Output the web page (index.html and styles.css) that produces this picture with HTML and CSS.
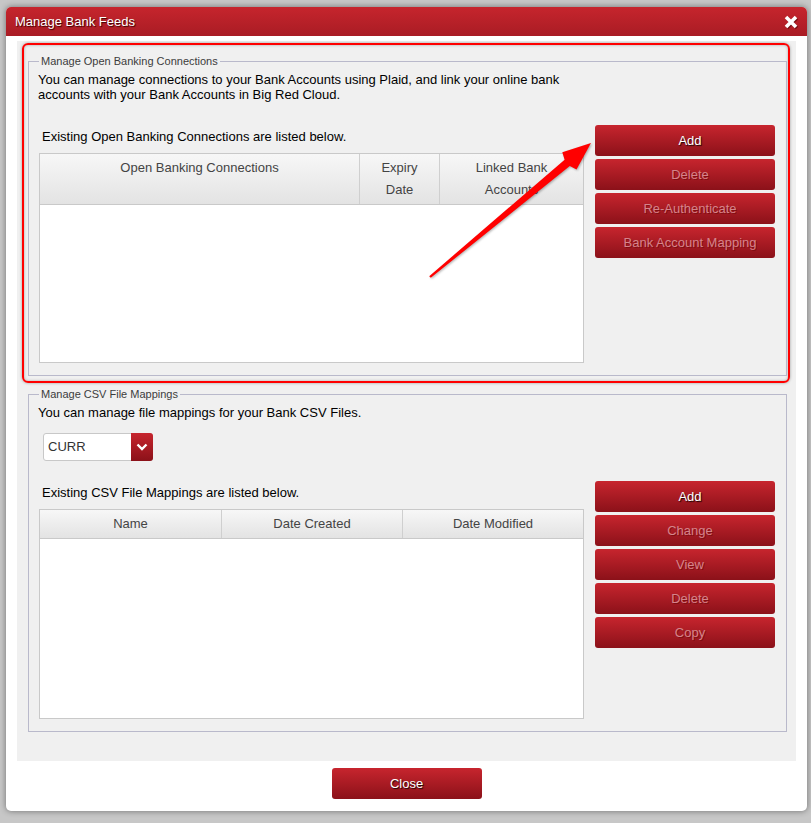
FILE: index.html
```html
<!DOCTYPE html>
<html lang="en">
<head>
  <meta charset="UTF-8">
  <meta name="viewport" content="width=device-width, initial-scale=1.0">
  <title>Manage Bank Feeds</title>
  <link rel="stylesheet" href="styles.css">
</head>
<body>

  <div class="dialog">
    <div class="dialog-title">
      <span>Manage Bank Feeds</span>
      <svg class="close-x" width="14" height="14" viewBox="0 0 14 14">
        <path d="M2 2L12 12M12 2L2 12" stroke="#fff" stroke-width="3.6" />
      </svg>
    </div>

    <div class="panel">
      <!-- red highlight round the open banking box -->
      <div class="highlight">
        <fieldset class="group">
          <legend>Manage Open Banking Connections</legend>
          <p class="intro">You can manage connections to your Bank Accounts using Plaid, and link your online bank accounts with your Bank Accounts in Big Red Cloud.</p>
          <div class="group-row">
            <div class="list-col">
              <div class="caption">Existing Open Banking Connections are listed below.</div>
              <div class="grid-table">
                <div class="grid-head cols-bank">
                  <div>Open Banking Connections</div>
                  <div>Expiry Date</div>
                  <div>Linked Bank Accounts</div>
                </div>
              </div>
            </div>
            <div class="btn-col">
              <button class="btn">Add</button>
              <button class="btn" disabled>Delete</button>
              <button class="btn" disabled>Re-Authenticate</button>
              <button class="btn" disabled>Bank Account Mapping</button>
            </div>
          </div>
        </fieldset>
      </div>

      <fieldset class="group csv">
        <legend>Manage CSV File Mappings</legend>
        <p class="intro">You can manage file mappings for your Bank CSV Files.</p>
        <div class="bank-select">
          <span class="bank-select-value">CURR</span>
          <span class="bank-select-btn">
            <svg width="12" height="8" viewBox="0 0 12 8"><path d="M1.5 1.5L6 6L10.5 1.5" fill="none" stroke="#fff" stroke-width="2.4" /></svg>
          </span>
        </div>
        <div class="group-row csv-row">
          <div class="list-col">
            <div class="caption">Existing CSV File Mappings are listed below.</div>
            <div class="grid-table">
              <div class="grid-head cols-csv">
                <div>Name</div>
                <div>Date Created</div>
                <div>Date Modified</div>
              </div>
            </div>
          </div>
          <div class="btn-col">
            <button class="btn">Add</button>
            <button class="btn" disabled>Change</button>
            <button class="btn" disabled>View</button>
            <button class="btn" disabled>Delete</button>
            <button class="btn" disabled>Copy</button>
          </div>
        </div>
      </fieldset>
    </div>

    <div class="dialog-foot">
      <button class="btn btn-close">Close</button>
    </div>
  </div>

  <!-- annotation arrow pointing at Add -->
  <svg class="arrow" width="811" height="823" viewBox="0 0 811 823">
    <polygon points="591,143 576.5,169.5 569.8,165.9 430.8,277.8 429.2,276.2 564.6,159.7 562.3,152.2" fill="#ff0000" />
  </svg>

</body>
</html>
```

FILE: styles.css
```css
body {
  margin: 0;
  height: 823px;
  overflow: hidden;
  background-color: #c7c7c7;
  font-family: "Liberation Sans", Arial, sans-serif;
  font-size: 13px;
  color: #000;
}
.dialog {
  margin: 7px 0 0 6px;
  width: 801px;
  padding-bottom: 12px;
  background-color: #fff;
  border-radius: 5px;
  box-shadow: 0 0 6px rgba(0, 0, 0, 0.45);
}
.dialog-title {
  height: 29px;
  padding: 0 9px;
  display: flex;
  align-items: center;
  justify-content: space-between;
  background: linear-gradient(#c6252d, #a91c24);
  border-radius: 5px 5px 0 0;
  color: #fff;
  text-shadow: 1px 1px 1px #3a0000;
}
.close-x {
  filter: drop-shadow(1px 1px 0 rgba(60, 0, 0, 0.5));
}
.panel {
  margin: 5px 11px 0;
  padding: 2px 9px 29px 11px;
  background-color: #f0f0f0;
}
.highlight {
  margin: 0 -3px 0 -6px;
  padding: 10px 1px 5px 4px;
  border: 2px solid #ff0000;
  border-radius: 6px;
  box-shadow: 0 0 3px rgba(0, 0, 0, 0.35), inset 0 0 3px rgba(0, 0, 0, 0.3);
}
.group {
  margin: 0;
  min-width: 0;
  padding: 5px 11px 12px 9px;
  border: 1px solid #b9b9cb;
}
.group legend {
  margin-left: 1px;
  padding: 0 2px;
  font-size: 11px;
  line-height: 12px;
  color: #3c3c3c;
}
.csv {
  margin-top: 5px;
}
.intro {
  margin: 0;
  width: 550px;
  line-height: 15px;
}
.group-row {
  display: flex;
  align-items: flex-start;
  gap: 11px;
  margin: 23px 0 0 1px;
}
.csv-row {
  margin-top: 20px;
}
.list-col {
  width: 545px;
}
.caption {
  margin: 4px 0 9px 3px;
  line-height: 15px;
}
.grid-table {
  height: 210px;
  box-sizing: border-box;
  border: 1px solid #c9c9c9;
  background-color: #fff;
}
.grid-head {
  display: grid;
  background: linear-gradient(#f7f7f7, #e3e3e3);
  border-bottom: 1px solid #c9c9c9;
  color: #444;
}
.grid-head div {
  padding: 3px 10px;
  line-height: 22px;
  text-align: center;
}
.grid-head div + div {
  border-left: 1px solid #cfcfcf;
}
.cols-bank {
  grid-template-columns: 319px 80px 1fr;
}
.cols-csv {
  grid-template-columns: 1fr 1fr 1fr;
}
.btn-col {
  width: 180px;
  display: flex;
  flex-direction: column;
  gap: 3px;
}
.btn {
  height: 31px;
  padding: 0;
  border: none;
  border-radius: 3px;
  background: linear-gradient(#c7252e, #8b1119);
  color: white;
  font-family: "Liberation Sans", Arial, sans-serif;
  font-size: 13px;
  text-shadow: 1px 1px 1px rgba(0, 0, 0, 0.85);
  cursor: pointer;
}
.btn-col .btn {
  padding-left: 10px;
}
.btn:disabled {
  color: #d5848b;
  text-shadow: 1px 1px 0 rgba(90, 0, 0, 0.45);
  cursor: default;
}
.bank-select {
  margin: 13px 0 0 5px;
  width: 110px;
  height: 28px;
  box-sizing: border-box;
  display: flex;
  border: 1px solid #c8c8c8;
  border-radius: 3px;
  background-color: #fff;
}
.bank-select-value {
  flex: 1;
  padding-left: 4px;
  line-height: 26px;
  color: #333;
}
.bank-select-btn {
  width: 22px;
  margin: -1px -1px -1px 0;
  display: flex;
  align-items: center;
  justify-content: center;
  background: linear-gradient(#c7252e, #8b1119);
  border-radius: 0 3px 3px 0;
}
.dialog-foot {
  padding-top: 7px;
  text-align: center;
}
.btn-close {
  width: 150px;
}
.arrow {
  position: absolute;
  left: 0;
  top: 0;
  pointer-events: none;
  filter: drop-shadow(1px 1px 1px rgba(0, 0, 0, 0.3));
}
```
